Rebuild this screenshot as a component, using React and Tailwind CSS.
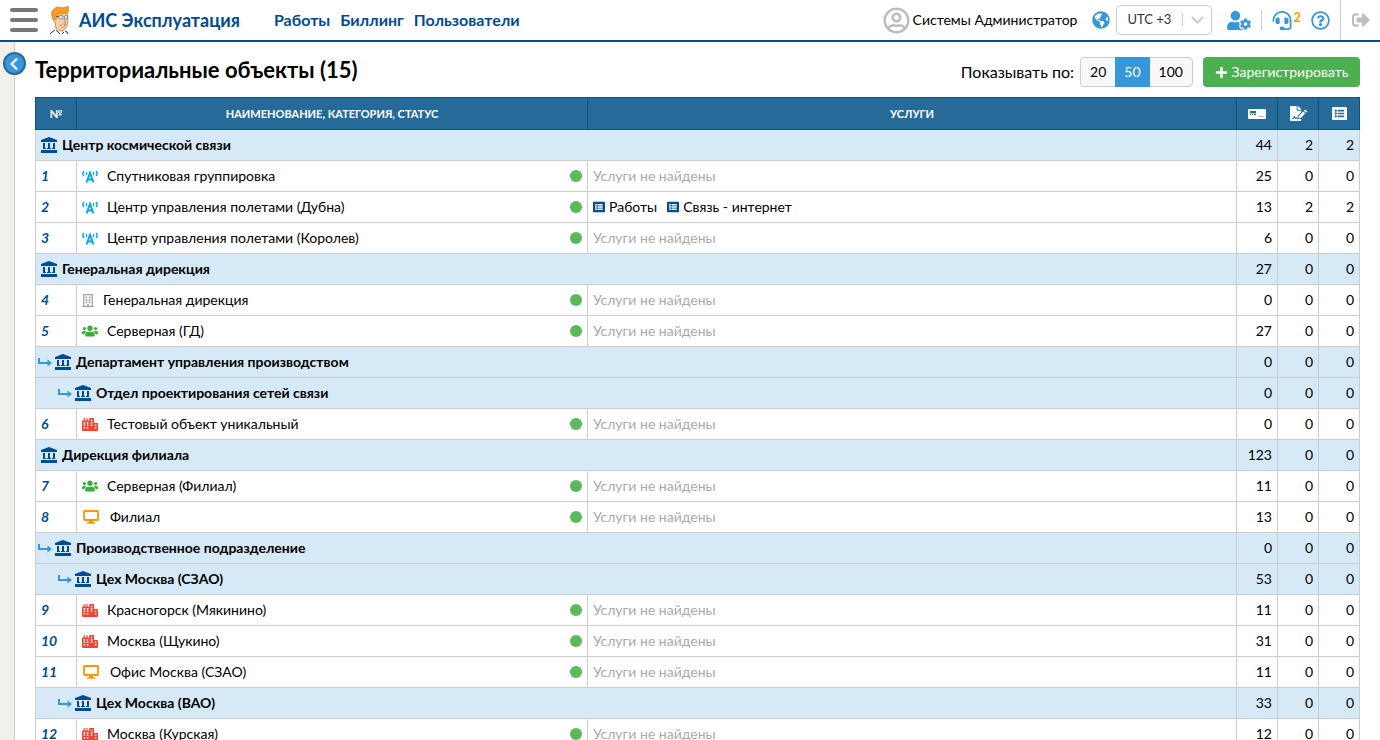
import { useState } from 'react';
import clsx from 'clsx';
import {
  FaChevronLeft,
  FaCity,
  FaFileSignature,
  FaGlobeAmericas,
  FaHeadset,
  FaListAlt,
  FaPlus,
  FaRegBuilding,
  FaRegQuestionCircle,
  FaRegUserCircle,
  FaSignOutAlt,
  FaUserCog,
  FaUsers,
} from 'react-icons/fa';

const NAV = ['Работы', 'Биллинг', 'Пользователи'];
const PAGE_SIZES = [20, 50, 100];

const ROWS = [
  { group: 'Центр космической связи', level: 0, counts: [44, 2, 2] },
  { id: 1, name: 'Спутниковая группировка', type: 'tower', counts: [25, 0, 0] },
  { id: 2, name: 'Центр управления полетами (Дубна)', type: 'tower', services: ['Работы', 'Связь - интернет'], counts: [13, 2, 2] },
  { id: 3, name: 'Центр управления полетами (Королев)', type: 'tower', counts: [6, 0, 0] },
  { group: 'Генеральная дирекция', level: 0, counts: [27, 0, 0] },
  { id: 4, name: 'Генеральная дирекция', type: 'building', counts: [0, 0, 0] },
  { id: 5, name: 'Серверная (ГД)', type: 'users', counts: [27, 0, 0] },
  { group: 'Департамент управления производством', level: 1, counts: [0, 0, 0] },
  { group: 'Отдел проектирования сетей связи', level: 2, counts: [0, 0, 0] },
  { id: 6, name: 'Тестовый объект уникальный', type: 'city', counts: [0, 0, 0] },
  { group: 'Дирекция филиала', level: 0, counts: [123, 0, 0] },
  { id: 7, name: 'Серверная (Филиал)', type: 'users', counts: [11, 0, 0] },
  { id: 8, name: 'Филиал', type: 'desktop', counts: [13, 0, 0] },
  { group: 'Производственное подразделение', level: 1, counts: [0, 0, 0] },
  { group: 'Цех Москва (СЗАО)', level: 2, counts: [53, 0, 0] },
  { id: 9, name: 'Красногорск (Мякинино)', type: 'city', counts: [11, 0, 0] },
  { id: 10, name: 'Москва (Щукино)', type: 'city', counts: [31, 0, 0] },
  { id: 11, name: 'Офис Москва (СЗАО)', type: 'desktop', counts: [11, 0, 0] },
  { group: 'Цех Москва (ВАО)', level: 2, counts: [33, 0, 0] },
  { id: 12, name: 'Москва (Курская)', type: 'city', counts: [12, 0, 0] },
];

const TYPES = {
  tower: { Icon: Antenna, size: 'w-4 h-[13px] mr-[9px]', color: 'text-[#03a9f4]' },
  building: { Icon: FaRegBuilding, size: 'w-3 h-[13px] mr-[9px]', color: 'text-[#9e9e9e]' },
  users: { Icon: FaUsers, size: 'w-4 h-4 mr-[9px]', color: 'text-[#35b035]' },
  city: { Icon: FaCity, size: 'w-4 h-[13px] mr-[9px]', color: 'text-[#f44336]' },
  desktop: { Icon: Desktop, size: 'w-[18px] h-[14px] mr-[10px]', color: 'text-[#ff9800]' },
};

const INDENTS = ['pl-[5px]', 'pl-[2px]', 'pl-[22px]'];

function Logo() {
  return (
    <svg className="w-5 h-7" viewBox="0 0 20 28">
      <path d="M1 28 3 25.500 6 23.500 12 26 16 25 18 28z" fill="#fff" />
      <path d="M0 28 2 26 5 24M15 25l2 1 1 2M6 24l4 4M14 26l-2 2" fill="none" stroke="#333" strokeWidth="1" />
      <path d="M4 10 6 6 17 5 18 13 17 20 13 25 10 25 6 22 5 16C3 16 2 12 4 12z" fill="#fccf9f" stroke="#a06a42" strokeWidth="0.7" />
      <path d="M3 13C1 9 1 5 4 3 6 0 9 1 11 1.500 14 2 16 1 18 0c1 3 1 6-1 7-3 1-6 0-8 1l-2 2-1 4z" fill="#f99b23" stroke="#c26f15" strokeWidth="0.5" />
      <path d="M6 10.500h3" stroke="#45698b" strokeWidth="1" />
      <rect x="9" y="9.500" width="4" height="3.500" rx="1" fill="#cfe8f5" stroke="#45698b" strokeWidth="0.6" />
      <rect x="14.500" y="9.500" width="3" height="3.500" rx="1" fill="#cfe8f5" stroke="#45698b" strokeWidth="0.6" />
      <path d="M14 13l1.500 4h-2" fill="none" stroke="#b87343" strokeWidth="0.7" />
      <path d="M10 19q4 1 5.500-1-1 4-3.500 3.500z" fill="#fff" stroke="#8b4a33" strokeWidth="0.5" />
    </svg>
  );
}

function Bank({ className }) {
  return (
    <svg className={className} viewBox="0 0 16 16" fill="currentColor">
      <path d="M8 0 16 3v2H0V3z" />
      <path d="M2 6h2v5h1v1H2zM7 6h2v5h1v1H6v-1h1zM12 6h2v6h-3v-1h1z" />
      <path d="M0 13h16v3H0z" />
    </svg>
  );
}

function Antenna({ className }) {
  return (
    <svg className={className} viewBox="0 0 16 13" fill="none" stroke="currentColor">
      <path d="M4.500 12.500 8 3l3.500 9.500M5.500 9.500h5" strokeWidth="2" />
      <path d="M1.800 1Q0 3.500 1.800 6M14.200 1Q16 3.500 14.200 6" strokeWidth="1.500" />
      <path d="M4.500 2v3M11.500 2v3" strokeWidth="1.300" />
    </svg>
  );
}

function Desktop({ className }) {
  return (
    <svg className={className} viewBox="0 0 18 14" fill="none" stroke="currentColor">
      <rect x="2" y="1" width="14" height="9" rx="0.500" strokeWidth="1.800" />
      <path d="M7 11.500h4M5 13h8" strokeWidth="1.400" />
    </svg>
  );
}

function SimCard() {
  return (
    <svg className="w-[18px] h-[10px]" viewBox="0 0 18 10">
      <rect width="18" height="10" rx="1" fill="#fff" />
      <path d="M2 2h6v2H2zM2 5h1v1H2zM4 5h1v1H4zM6 5h2v1H6z" fill="#266a9a" />
      <path d="M10 7h6v1h-6zM2 4h6v1H2z" fill="#a8c6dc" />
    </svg>
  );
}

function SubArrow() {
  return (
    <svg className="w-[14px] h-[10px]" viewBox="0 0 14 10">
      <path d="M1 1v5h9" fill="none" stroke="#3598db" strokeWidth="2" />
      <path d="M9.500 2.500 14 6 9.500 9.500z" fill="#3598db" />
    </svg>
  );
}

function Header() {
  return (
    <header className="flex-none h-[42px] flex items-center border-b-2 border-[#004b93] bg-white">
      <button className="ml-[10px] flex flex-col gap-[6px]" aria-label="Меню">
        <span className="w-7 h-1 rounded-xs bg-[#777]" />
        <span className="w-7 h-1 rounded-xs bg-[#777]" />
        <span className="w-7 h-1 rounded-xs bg-[#777]" />
      </button>
      <a href="#" className="ml-3 flex items-center gap-[9px] text-[#004b93] text-lg font-bold">
        <Logo />
        АИС Эксплуатация
      </a>
      <nav className="ml-[34px] flex gap-[10px] text-[#004b93] text-base font-bold">
        {NAV.map((item) => (
          <a key={item} href="#">{item}</a>
        ))}
      </nav>

      <div className="ml-auto h-full flex items-center">
        <FaRegUserCircle className="w-[27px] h-[27px] mr-[3px] text-[#bdbdbd]" />
        <span className="text-sm">Системы Администратор</span>
        <FaGlobeAmericas className="w-[18px] h-[18px] ml-[15px] mr-[6px] text-[#3598db]" />
        <div className="relative w-24 h-[30px]">
          <select
            aria-label="Часовой пояс"
            className="w-full h-full appearance-none rounded-sm border border-[#ccc] bg-white pl-[10px] text-[13px] text-[#333]"
          >
            <option>UTC +3</option>
          </select>
          <span className="pointer-events-none absolute right-[29px] top-2 h-[13px] w-px bg-[#ccc]" />
          <svg className="pointer-events-none absolute right-2 top-[11px] w-[13px] h-2" viewBox="0 0 13 8">
            <path d="M1.500 1.500l5 5 5-5" fill="none" stroke="#ccc" strokeWidth="2" strokeLinecap="round" />
          </svg>
        </div>
        <button className="ml-[15px]" aria-label="Настройки пользователя">
          <FaUserCog className="w-6 h-[19px] text-[#3598db]" />
        </button>
        <span className="ml-[10px] h-5 w-px bg-[#ccc]" />
        <button className="ml-[10px] flex items-center" aria-label="Поддержка">
          <FaHeadset className="w-5 h-[19px] text-[#3598db]" />
          <span className="ml-px mb-[6px] text-[13px] leading-4 font-bold text-[#ff9800]">2</span>
        </button>
        <button className="ml-[10px]" aria-label="Помощь">
          <FaRegQuestionCircle className="w-[19px] h-[19px] text-[#3598db]" />
        </button>
        <div className="ml-[10px] h-full w-10 flex items-center justify-center border-l border-[#ccc]">
          <button aria-label="Выход">
            <FaSignOutAlt className="w-[18px] h-[18px] text-[#bdbdbd]" />
          </button>
        </div>
      </div>
    </header>
  );
}

function Toolbar() {
  const [pageSize, setPageSize] = useState(50);

  return (
    <div className="flex items-center h-[55px] pt-[5px]">
      <h1 className="pb-1 text-[22px] leading-7 font-bold">Территориальные объекты (15)</h1>
      <div className="ml-auto flex items-center">
        <span className="mr-[6px] text-base">Показывать по:</span>
        <div className="flex h-[30px] w-[113px] rounded-sm border border-[#ccc] bg-[#f8f8f8] text-sm">
          {PAGE_SIZES.map((size) => (
            <button
              key={size}
              onClick={() => setPageSize(size)}
              className={clsx(
                'grow',
                size === pageSize && '-my-px bg-[#3598db] text-white'
              )}
            >
              {size}
            </button>
          ))}
        </div>
        <button className="ml-[10px] h-[30px] w-[157px] flex items-center justify-center gap-1 rounded-sm bg-[#4caf50] text-white text-sm">
          <FaPlus className="w-[13px] h-[13px]" />
          Зарегистрировать
        </button>
      </div>
    </div>
  );
}

function Counts({ values }) {
  return values.map((value, i) => (
    <td key={i} className="border border-[#ccc] pr-[5px] text-right">{value}</td>
  ));
}

function GroupRow({ row }) {
  return (
    <tr className="h-[31px] bg-[#d6e9f7]">
      <td colSpan={3} className="border border-[#ccc]">
        <div className={clsx('flex items-center font-bold', INDENTS[row.level])}>
          {row.level > 0 && <span className="mr-[3px]"><SubArrow /></span>}
          <Bank className="w-4 h-4 mr-[5px] text-[#004b93]" />
          {row.group}
        </div>
      </td>
      <Counts values={row.counts} />
    </tr>
  );
}

function ObjectRow({ row }) {
  const { Icon, size, color } = TYPES[row.type];

  return (
    <tr className="h-[31px] bg-white">
      <td className="border border-[#ccc] pl-[5px] font-bold italic text-[#004b93]">{row.id}</td>
      <td className="border border-[#ccc] px-[5px]">
        <div className="flex items-center">
          <Icon className={clsx(size, color)} />
          {row.name}
          <span className="ml-auto w-3 h-3 rounded-full bg-[#5cb85c]" />
        </div>
      </td>
      <td className="border border-[#ccc] px-[5px]">
        {row.services ? (
          <div className="flex gap-[10px]">
            {row.services.map((service) => (
              <a key={service} href="#" className="flex items-center gap-1">
                <FaListAlt className="w-3 h-3 text-[#004b93]" />
                {service}
              </a>
            ))}
          </div>
        ) : (
          <span className="text-[#aaa]">Услуги не найдены</span>
        )}
      </td>
      <Counts values={row.counts} />
    </tr>
  );
}

function ObjectsTable() {
  return (
    <table className="w-full table-fixed border-collapse text-sm leading-5">
      <colgroup>
        <col className="w-[41px]" />
        <col className="w-[511px]" />
        <col />
        <col className="w-[41px]" />
        <col className="w-[41px]" />
        <col className="w-[41px]" />
      </colgroup>
      <thead>
        <tr className="h-8 bg-[#266a9a] text-[11px] text-white">
          <th className="border border-[#0f5374] font-bold">№</th>
          <th className="border border-[#0f5374] font-bold">НАИМЕНОВАНИЕ, КАТЕГОРИЯ, СТАТУС</th>
          <th className="border border-[#0f5374] font-bold">УСЛУГИ</th>
          <th className="border border-[#0f5374]" aria-label="Оборудование">
            <span className="flex justify-center"><SimCard /></span>
          </th>
          <th className="border border-[#0f5374]" aria-label="Заявки">
            <FaFileSignature className="mx-auto w-[17px] h-[15px]" />
          </th>
          <th className="border border-[#0f5374]" aria-label="Услуги">
            <FaListAlt className="mx-auto w-[15px] h-[15px]" />
          </th>
        </tr>
      </thead>
      <tbody>
        {ROWS.map((row, i) =>
          row.group ? <GroupRow key={i} row={row} /> : <ObjectRow key={i} row={row} />
        )}
      </tbody>
    </table>
  );
}

export default function App() {
  return (
    <div className="h-screen overflow-hidden flex flex-col bg-white text-black font-['Trebuchet_MS','Lato',sans-serif]">
      <Header />
      <div className="flex-1 min-h-0 flex">
        {/* Collapsed side panel */}
        <aside className="relative flex-none w-[15px] border-r border-[#ccc] bg-[#f1f0ec]">
          <button
            aria-label="Открыть панель"
            className="absolute left-[3px] top-[10px] w-[23px] h-[23px] flex items-center justify-center rounded-full border-2 border-[#266a9a] bg-[#3598db] text-white"
          >
            <FaChevronLeft className="w-[14px] h-[14px] mr-0.5" />
          </button>
        </aside>
        <main className="flex-1 min-w-0 px-5">
          <Toolbar />
          <ObjectsTable />
        </main>
      </div>
    </div>
  );
}
